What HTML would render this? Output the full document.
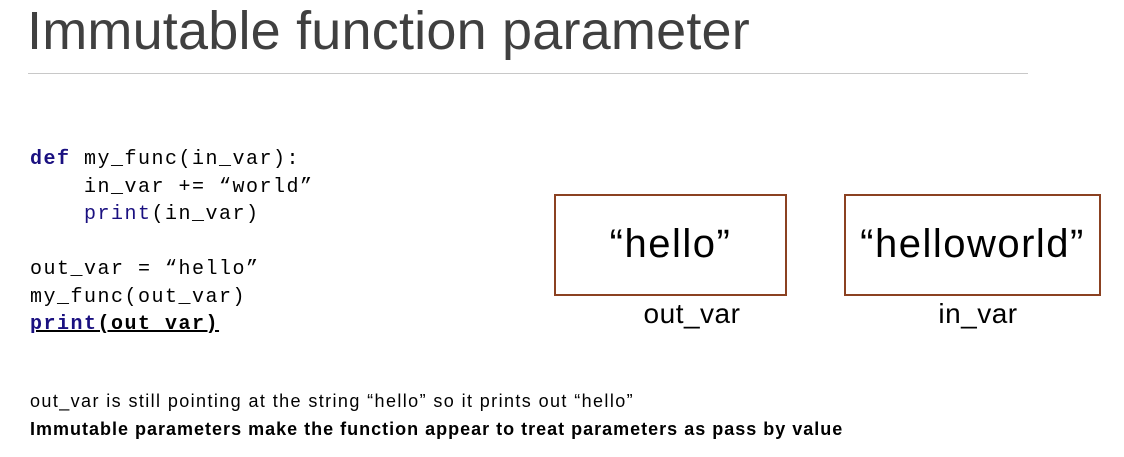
<!DOCTYPE html>
<html><head><style>
body{margin:0;width:1124px;height:457px;background:#fff;position:relative;overflow:hidden;font-family:"Liberation Sans",sans-serif;}
.t{position:absolute;left:27px;top:0px;font-size:54px;color:#404040;letter-spacing:0.2px;white-space:nowrap;}
.hr{position:absolute;left:28px;top:73px;width:1000px;height:1px;background:#c8c8c8;}
.code{position:absolute;left:30px;top:146px;font-family:"Liberation Mono",monospace;font-size:20px;line-height:27.5px;color:#000;white-space:pre;letter-spacing:1.5px;}
.k{color:#1a1080;font-weight:bold}
.p{color:#1a1080}
.box{position:absolute;border:2px solid #8b4121;box-sizing:border-box;text-align:center;font-size:40px;color:#000;line-height:96px;letter-spacing:1.5px}
.lab{position:absolute;font-size:28px;color:#000;text-align:center;letter-spacing:0.5px}
.b{position:absolute;left:30px;font-size:18px;color:#000;white-space:nowrap}
</style></head><body>
<div class="t">Immutable function parameter</div>
<div class="hr"></div>
<div class="code"><span class="k">def</span> my_func(in_var):
    in_var += “world”
    <span class="p">print</span>(in_var)

out_var = “hello”
my_func(out_var)
<b style="text-decoration:underline"><span class="p">print</span>(out_var)</b></div>
<div class="box" style="left:554px;top:194px;width:233px;height:102px">“hello”</div>
<div class="box" style="left:844px;top:194px;width:257px;height:102px">“helloworld”</div>
<div class="lab" style="left:554px;top:298px;width:276px">out_var</div>
<div class="lab" style="left:844px;top:298px;width:268px">in_var</div>
<div class="b" style="top:391px;letter-spacing:1.4px">out_var is still pointing at the string “hello” so it prints out “hello”</div>
<div class="b" style="top:419px;font-weight:bold;letter-spacing:1px">Immutable parameters make the function appear to treat parameters as pass by value</div>
</body></html>
